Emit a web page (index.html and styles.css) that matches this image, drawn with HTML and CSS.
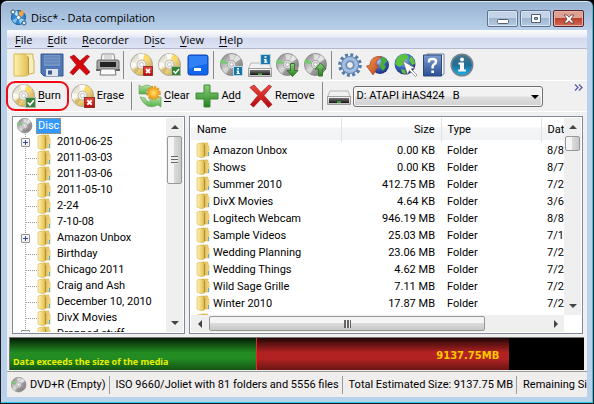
FILE: index.html
```html
<!DOCTYPE html>
<html lang="en">
<head>
<meta charset="utf-8">
<title>Disc* - Data compilation</title>
<link rel="stylesheet" href="styles.css">
</head>
<body>
<svg class="sprite" aria-hidden="true">
  <defs>
    <linearGradient id="gFolder" x1="0" x2="1"><stop offset="0" stop-color="#fff3b0"/><stop offset="1" stop-color="#e2bf55"/></linearGradient>
    <linearGradient id="gFolderBack" x1="0" x2="1"><stop offset="0" stop-color="#c9a13a"/><stop offset="1" stop-color="#f6e08c"/></linearGradient>
    <linearGradient id="gGold" x1="0" y1="0" x2="1" y2="1"><stop offset="0" stop-color="#c9c9c4"/><stop offset=".35" stop-color="#f3efe0"/><stop offset=".6" stop-color="#e9cd78"/><stop offset="1" stop-color="#b98d35"/></linearGradient>
    <linearGradient id="gSilver" x1="0" y1="0" x2="1" y2="1"><stop offset="0" stop-color="#7e7e7e"/><stop offset=".45" stop-color="#cfcfcf"/><stop offset=".6" stop-color="#9c9c9c"/><stop offset="1" stop-color="#6c6c6c"/></linearGradient>
    <linearGradient id="gRed" x1="0" y1="0" x2="0" y2="1"><stop offset="0" stop-color="#ee4a42"/><stop offset="1" stop-color="#b3060c"/></linearGradient>
    <linearGradient id="gGreen" x1="0" y1="0" x2="0" y2="1"><stop offset="0" stop-color="#8fd07c"/><stop offset="1" stop-color="#23821f"/></linearGradient>
    <linearGradient id="gLeaf" x1="0" y1="0" x2="0" y2="1"><stop offset="0" stop-color="#b5e3a6"/><stop offset="1" stop-color="#4fae45"/></linearGradient>
    <linearGradient id="gBlue" x1="0" y1="0" x2="0" y2="1"><stop offset="0" stop-color="#7b9cd0"/><stop offset="1" stop-color="#2c4f93"/></linearGradient>
    <linearGradient id="gMetal" x1="0" y1="0" x2="0" y2="1"><stop offset="0" stop-color="#fbfbfb"/><stop offset="1" stop-color="#b8b8b8"/></linearGradient>
    <linearGradient id="gDark" x1="0" y1="0" x2="0" y2="1"><stop offset="0" stop-color="#777"/><stop offset="1" stop-color="#161616"/></linearGradient>
    <linearGradient id="gInfo" x1="0" y1="0" x2="0" y2="1"><stop offset="0" stop-color="#4d7488"/><stop offset=".5" stop-color="#1f6d95"/><stop offset="1" stop-color="#18b2ee"/></linearGradient>
    <radialGradient id="gGlobe" cx=".4" cy=".3" r=".8"><stop offset="0" stop-color="#a5c8f4"/><stop offset=".5" stop-color="#3862bf"/><stop offset="1" stop-color="#131d62"/></radialGradient>
    <radialGradient id="gSun"><stop offset="0" stop-color="#ffe46c"/><stop offset="1" stop-color="#f49a13"/></radialGradient>
    <linearGradient id="gOrange" x1="0" y1="0" x2="1" y2="1"><stop offset="0" stop-color="#ee9a5c"/><stop offset="1" stop-color="#bf3e10"/></linearGradient>
  </defs>
  <symbol id="folder" viewBox="0 0 14 16">
    <path d="M6 1h6v3h1v10H6z" fill="url(#gFolderBack)" stroke="#dcb84c" stroke-width=".6"/>
    <path d="M1 2l5-1 2 2v12l-2 1-5-2z" fill="url(#gFolder)" stroke="#d6b34c" stroke-width=".6"/>
    <path d="M8 3h1v11l-1 1z" fill="#b88f2c"/>
    <path d="M12 10h1v4h-1z" fill="#58aede"/>
  </symbol>
  <symbol id="goldDisc" viewBox="0 0 24 24">
    <circle cx="11.500" cy="11.500" r="11" fill="url(#gGold)" stroke="#a39b86" stroke-width=".8"/>
    <path d="M11.500 11.500L8 1l6-.5z" fill="#fff" opacity=".8"/>
    <path d="M11.500 11.500L15 1l5 3.500z" fill="#ffd955" opacity=".9"/>
    <path d="M11.500 11.500L1 9v6z" fill="#fff" opacity=".7"/>
    <path d="M11.500 11.500L6 21l-3-4z" fill="#c9ab5c" opacity=".7"/>
    <circle cx="11.500" cy="11.500" r="4.500" fill="#eee" stroke="#b5ab94" stroke-width=".8"/>
    <circle cx="11.500" cy="11.500" r="2" fill="#fff" stroke="#aaa" stroke-width=".6"/>
  </symbol>
  <symbol id="grayDisc" viewBox="0 0 24 24">
    <circle cx="11.500" cy="11.500" r="11" fill="url(#gSilver)" stroke="#7c7c7c" stroke-width=".8"/>
    <path d="M11.500 11.500L9 1l6 .5z" fill="#fff" opacity=".5"/>
    <path d="M11.500 11.500L17 2l4 4z" fill="#eee" opacity=".8"/>
    <path d="M11.500 11.500L1 6l-.5 4z" fill="#6fce68"/>
    <path d="M11.500 11.500L2 17l4 4z" fill="#dcdcdc" opacity=".8"/>
    <path d="M11.500 11.500L22 14l-2 4z" fill="#c98c9e" opacity=".5"/>
    <circle cx="11.500" cy="11.500" r="4.200" fill="#ddd" stroke="#999" stroke-width=".8"/>
    <circle cx="11.500" cy="11.500" r="1.800" fill="#fff" stroke="#888" stroke-width=".6"/>
  </symbol>
  <symbol id="badX" viewBox="0 0 10 10"><path d="M.5.5h9v9h-9z" fill="url(#gRed)" stroke="#94322c"/><path d="M3 3l4 4M7 3L3 7" stroke="#fff" stroke-width="1.800"/></symbol>
  <symbol id="badOk" viewBox="0 0 10 10"><path d="M.5.5h9v9h-9z" fill="#36813a" stroke="#a9bda5"/><path d="M2.500 5l2 2.200L8 3" fill="none" stroke="#fff" stroke-width="1.500"/></symbol>
  <symbol id="badInfo" viewBox="0 0 10 10"><path d="M.5.5h9v9h-9z" fill="#1475a8" stroke="#bdd5df"/><path d="M4 2h2v1.500H4zM3.500 4.500H6V7h.8v1H3.500V7h.7V5.400h-.7z" fill="#fff"/></symbol>
  <symbol id="drive" viewBox="0 0 24 24">
    <path d="M3 7h18l2.500 6H.5z" fill="#f1f1f1" stroke="#aaa" stroke-width=".8"/>
    <path d="M.5 12.500h23v8H.5z" fill="url(#gMetal)" stroke="#8b8b8b" stroke-width=".8"/>
    <path d="M2 14h20v5H2z" fill="url(#gDark)"/><path d="M10 17.500h4v1.200h-4z" fill="#45e23d"/>
  </symbol>
  <symbol id="cross" viewBox="0 0 24 24"><path d="M1 3.500L5 1l7 7.500L20 1l2.500 1.500L15 11.500 23 20.500 19.500 23.500 12 15 4.500 23 1.500 20.500 9 11.500z" fill="url(#gRed)" stroke="#a81216" stroke-width=".7"/></symbol>
</svg>

<div class="window">
  <header class="titlebar">
    <svg class="app-icon" viewBox="0 0 17 17" aria-hidden="true">
      <circle cx="8.500" cy="8.500" r="7" fill="#3187d3" stroke="#174f92"/>
      <path d="M8.500 8.500L3 4l4-2.500z" fill="#bce8ff"/><path d="M8.500 8.500L15 11l-5 4z" fill="#8fd3f5"/><path d="M8.500 8.500L2 11l3 3.500z" fill="#7cc4f0"/>
      <path d="M9 7l0-5 1.500 1L12 0l2 4-2 4z" fill="#f6a238"/>
      <circle cx="8.500" cy="8.500" r="2" fill="#fff" stroke="#27577e" stroke-width=".6"/><circle cx="3" cy="3" r="2" fill="#fff" stroke="#27577e"/><circle cx="14" cy="14" r="2" fill="#d9f1ff" stroke="#27577e"/>
    </svg>
    <h1 class="title">Disc* - Data compilation</h1>
    <div class="caption-buttons">
      <button class="caption" aria-label="Minimize"><svg viewBox="0 0 12 12"><rect x=".5" y="6.500" width="11" height="4" rx="1" fill="#fff" stroke="#535f70"/></svg></button>
      <button class="caption" aria-label="Maximize"><svg viewBox="0 0 12 12"><path d="M1.500 1.500h9v8h-9zM4.500 4.500v2h3v-2z" fill="#fff" fill-rule="evenodd" stroke="#535f70"/></svg></button>
      <button class="caption close" aria-label="Close"><svg viewBox="0 0 12 12"><path d="M1 2h3l2 2.200L8 2h3L8 6l3 4H8L6 7.800 4 10H1l3-4z" fill="#fff" stroke="#5c3b43" stroke-width=".8"/></svg></button>
    </div>
  </header>

  <main class="client">
    <nav class="menubar">
      <button><u>F</u>ile</button><button><u>E</u>dit</button><button><u>R</u>ecorder</button><button>D<u>i</u>sc</button><button><u>V</u>iew</button><button><u>H</u>elp</button>
    </nav>

    <div class="toolbar" role="toolbar" aria-label="Standard">
      <button class="tool" aria-label="Open"><svg viewBox="0 0 24 24"><path d="M10 1h11v5l1 1v13l-9 2z" fill="#f7edbd" stroke="#cfb058"/><path d="M2 1h10l4 3v18l-3 1H2z" fill="url(#gFolder)" stroke="#d6b858"/><path d="M16 5l1-2v17l-1 2z" fill="#bd9535"/></svg></button>
      <button class="tool" aria-label="Save"><svg viewBox="0 0 24 24"><path d="M1 1h22v22H4l-3-3z" fill="#5078b6" stroke="#365789"/><path d="M4 2h16v11H4z" fill="#7595c8"/><path d="M5 4h14M5 7h14M5 10h14" stroke="#587caf"/><path d="M6 16h12v7H6z" fill="#dfe6ee"/><path d="M8 17.500h4v4H8z" fill="#3c5c92"/></svg></button>
      <button class="tool" aria-label="Delete"><svg viewBox="0 0 24 24"><path d="M2 4l4-2 6 6 7-6 2.500 1.500L15 11l7 8-3.500 3-7-7L5 22l-3-2.500L8.500 12z" fill="#d4080d" stroke="#ab1a1a" stroke-width=".8"/></svg></button>
      <button class="tool" aria-label="Print"><svg viewBox="0 0 24 24"><path d="M6 1h12l1 7H5z" fill="#f8f8f8" stroke="#8c8c8c"/><path d="M8 3h8M8 5h8" stroke="#bbb"/><path d="M1 8q0-1 2-1h18q2 0 2 1v9H1z" fill="#a5a5a5" stroke="#6a6a6a"/><path d="M4 9h16v5H4z" fill="#222"/><path d="M0 16h24v2H0z" fill="#666"/><path d="M5 16h14l1 6H4z" fill="#fafafa" stroke="#777"/></svg></button>
      <span class="sep"></span>
      <button class="tool" aria-label="Erase disc"><svg viewBox="0 0 24 24"><use href="#goldDisc"/><use href="#badX" x="13" y="13" width="10" height="10"/></svg></button>
      <button class="tool" aria-label="Burn disc"><svg viewBox="0 0 24 24"><use href="#goldDisc"/><use href="#badOk" x="13" y="13" width="10" height="10"/></svg></button>
      <button class="tool" aria-label="Blue view"><svg viewBox="0 0 24 24"><rect x="2" y="2" width="20" height="20" rx="2" fill="#1268ec" stroke="#1040b5"/><path d="M3 3h18v8q-9 1-18 5z" fill="#3f8af9" opacity=".7"/><path d="M8 15h7v3H8z" fill="#fff"/></svg></button>
      <span class="sep"></span>
      <button class="tool" aria-label="Disc information"><svg viewBox="0 0 24 24"><use href="#grayDisc"/><use href="#badInfo" x="13" y="13" width="10" height="10"/></svg></button>
      <button class="tool" aria-label="Drive information"><svg viewBox="0 0 24 24"><use href="#drive" y="3" width="24" height="24"/><use href="#badInfo" x="12" y="1" width="11" height="11"/></svg></button>
      <button class="tool" aria-label="Import session"><svg viewBox="0 0 24 24"><use href="#grayDisc"/><path d="M14.500 10.500h4v7h3.500l-5.500 6-5.500-6h3.500z" fill="url(#gGreen)" stroke="#39752f"/></svg></button>
      <button class="tool" aria-label="Export session"><svg viewBox="0 0 24 24"><use href="#grayDisc"/><path d="M14.500 23v-7H11l5.500-6 5.500 6h-3.500v7z" fill="url(#gGreen)" stroke="#39752f"/></svg></button>
      <span class="sep"></span>
      <button class="tool" aria-label="Options"><svg viewBox="0 0 24 24"><circle cx="12" cy="12" r="10.200" fill="none" stroke="#557bab" stroke-width="3.200" stroke-dasharray="3 2.340"/><circle cx="12" cy="12" r="6.300" fill="none" stroke="#5f82af" stroke-width="5.600"/><circle cx="12" cy="12" r="6.300" fill="none" stroke="#a1bedf" stroke-width="3.500"/><circle cx="12" cy="12" r="3.500" fill="#f0f0f0" stroke="#5d7fa9"/></svg></button>
      <button class="tool" aria-label="Web update"><svg viewBox="0 0 24 24"><circle cx="14" cy="12" r="9" fill="url(#gGlobe)"/><path d="M15 4q6 0 6 5l-3 2 2 3-3 4-3-4 1-5z" fill="#49ac3b"/><path d="M16 4C8 2 4 7 4 12L.5 13 7 22l6-10-3 .5C10 8 13 5 16 4z" fill="url(#gOrange)" stroke="#a84620" stroke-width=".7"/></svg></button>
      <button class="tool" aria-label="Web site"><svg viewBox="0 0 24 24"><circle cx="11" cy="11" r="10.500" fill="url(#gGlobe)"/><path d="M3 5q4-4 9-4l3 3-4 3-1 4-5 3-4-3zM17 3q4 4 4 8l-3 1-3-5zM7 16l4 1 1 4-4-1z" fill="#5ec33c"/><path d="M9 8l12 7-4 1 6 6-1.500 1.500-6-6-2 4z" fill="#fff" stroke="#777" stroke-width=".7"/></svg></button>
      <button class="tool" aria-label="Help"><svg viewBox="0 0 24 24"><path d="M5 1h17v20l-3 2z" fill="#f7f9fc" stroke="#7083a3"/><path d="M1.500 2h18v21h-18z" fill="url(#gBlue)" stroke="#2b4678"/><path d="M7 9.500V8q0-2 3.500-2T14 8.500q0 1.700-1.700 2.700T10.600 14v1.500" fill="none" stroke="#fff" stroke-width="2.500"/><path d="M9.300 17.500h2.700V20H9.300z" fill="#fff"/></svg></button>
      <button class="tool" aria-label="About"><svg viewBox="0 0 24 24"><circle cx="12" cy="12" r="10.700" fill="url(#gInfo)" stroke="#71858e" stroke-width="1.600"/><circle cx="12" cy="6.500" r="2" fill="#fff"/><path d="M8.500 9.500H14v7h1.800v2H8.300v-2H10v-5H8.500z" fill="#fff"/></svg></button>
    </div>

    <div class="toolbar second" role="toolbar" aria-label="Compilation">
      <button class="action marked"><svg viewBox="0 0 24 24"><use href="#goldDisc"/><use href="#badOk" x="13" y="13" width="11" height="11"/></svg><span><u>B</u>urn</span></button>
      <button class="action"><svg viewBox="0 0 24 24"><use href="#goldDisc"/><use href="#badX" x="13" y="13" width="11" height="11"/></svg><span>Er<u>a</u>se</span></button>
      <span class="sep"></span>
      <button class="action"><svg viewBox="0 0 24 24"><path d="M1 1l3 2q5-4 10 0l-3 4q-3-1-4 0l3 3H1z" fill="url(#gLeaf)" stroke="#6aa763" stroke-width=".7"/><path d="M2 13l5 1q1 4 6 4l-2-4 12-1v10l-3-2Q8 27 2 13z" fill="url(#gLeaf)" stroke="#6aa763" stroke-width=".7"/><circle cx="15.500" cy="9" r="6" fill="none" stroke="#dc9a24" stroke-width="2.500" stroke-dasharray="2 1.140"/><circle cx="15.500" cy="9" r="5.500" fill="url(#gSun)"/></svg><span><u>C</u>lear</span></button>
      <button class="action spaced"><svg viewBox="0 0 24 24"><path d="M9 1h6v8h8v6h-8v8H9v-8H1V9h8z" fill="url(#gGreen)" stroke="#3d8b39"/></svg><span>A<u>d</u>d</span></button>
      <button class="action"><svg viewBox="0 0 24 24"><use href="#cross"/></svg><span>Re<u>m</u>ove</span></button>
      <span class="sep"></span>
      <svg class="drive-icon" viewBox="0 0 24 24" aria-hidden="true"><use href="#drive"/></svg>
      <div class="drive-select"><select aria-label="Recorder"><option>D: ATAPI iHAS424 &nbsp; B</option></select></div>
      <button class="more" aria-label="More buttons"><svg viewBox="0 0 9 7"><path d="M1 .5l3 3-3 3M5 .5l3 3-3 3" fill="none" stroke="#5c5aa6" stroke-width="1.300"/></svg></button>
    </div>

    <div class="panes">
      <section class="pane tree-pane" aria-label="Folders">
        <div class="tree">
          <div class="root"><svg viewBox="0 0 24 24"><use href="#grayDisc"/></svg><span class="selected">Disc</span></div>
          <ul>
            <li><button class="expand" aria-label="Expand"></button><svg><use href="#folder"/></svg>2010-06-25</li>
            <li><i></i><svg><use href="#folder"/></svg>2011-03-03</li>
            <li><i></i><svg><use href="#folder"/></svg>2011-03-06</li>
            <li><i></i><svg><use href="#folder"/></svg>2011-05-10</li>
            <li><i></i><svg><use href="#folder"/></svg>2-24</li>
            <li><i></i><svg><use href="#folder"/></svg>7-10-08</li>
            <li><button class="expand" aria-label="Expand"></button><svg><use href="#folder"/></svg>Amazon Unbox</li>
            <li><i></i><svg><use href="#folder"/></svg>Birthday</li>
            <li><i></i><svg><use href="#folder"/></svg>Chicago 2011</li>
            <li><i></i><svg><use href="#folder"/></svg>Craig and Ash</li>
            <li><i></i><svg><use href="#folder"/></svg>December 10, 2010</li>
            <li><i></i><svg><use href="#folder"/></svg>DivX Movies</li>
            <li><button class="expand" aria-label="Expand"></button><svg><use href="#folder"/></svg>Dropped stuff</li>
          </ul>
        </div>
        <div class="vscroll"><b class="arrow up"></b><b class="thumb tall"></b><b class="arrow down"></b></div>
      </section>

      <section class="pane list-pane" aria-label="Files">
        <div class="list">
          <table>
            <colgroup><col class="c-name"><col class="c-size"><col class="c-type"><col class="c-date"></colgroup>
            <thead><tr><th>Name</th><th class="num">Size</th><th>Type</th><th>Date</th></tr></thead>
            <tbody>
              <tr><td><svg><use href="#folder"/></svg>Amazon Unbox</td><td class="num">0.00 KB</td><td>Folder</td><td>8/8</td></tr>
              <tr><td><svg><use href="#folder"/></svg>Shows</td><td class="num">0.00 KB</td><td>Folder</td><td>8/7</td></tr>
              <tr><td><svg><use href="#folder"/></svg>Summer 2010</td><td class="num">412.75 MB</td><td>Folder</td><td>7/2</td></tr>
              <tr><td><svg><use href="#folder"/></svg>DivX Movies</td><td class="num">4.64 KB</td><td>Folder</td><td>3/6</td></tr>
              <tr><td><svg><use href="#folder"/></svg>Logitech Webcam</td><td class="num">946.19 MB</td><td>Folder</td><td>8/8</td></tr>
              <tr><td><svg><use href="#folder"/></svg>Sample Videos</td><td class="num">25.03 MB</td><td>Folder</td><td>7/1</td></tr>
              <tr><td><svg><use href="#folder"/></svg>Wedding Planning</td><td class="num">23.06 MB</td><td>Folder</td><td>7/2</td></tr>
              <tr><td><svg><use href="#folder"/></svg>Wedding Things</td><td class="num">4.62 MB</td><td>Folder</td><td>7/2</td></tr>
              <tr><td><svg><use href="#folder"/></svg>Wild Sage Grille</td><td class="num">7.11 MB</td><td>Folder</td><td>7/2</td></tr>
              <tr><td><svg><use href="#folder"/></svg>Winter 2010</td><td class="num">17.87 MB</td><td>Folder</td><td>7/2</td></tr>
              <tr><td><svg><use href="#folder"/></svg></td><td></td><td></td><td></td></tr>
            </tbody>
          </table>
        </div>
        <div class="vscroll"><b class="arrow up"></b><b class="thumb short"></b><b class="arrow down"></b></div>
        <div class="hscroll"><b class="arrow left"></b><b class="thumb"></b><b class="arrow right"></b></div>
      </section>
    </div>

    <div class="capacity">
      <div class="used">Data exceeds the size of the media</div>
      <div class="over">9137.75MB</div>
    </div>

    <footer class="status">
      <span class="media"><svg viewBox="0 0 24 24" aria-hidden="true"><use href="#grayDisc"/></svg>DVD+R (Empty)</span>
      <span>ISO 9660/Joliet with 81 folders and 5556 files</span>
      <span>Total Estimated Size: 9137.75 MB</span>
      <span>Remaining Size</span>
    </footer>
  </main>
</div>
</body>
</html>
```

FILE: styles.css
```css
* { box-sizing: border-box; }

body {
  margin: 0;
  background: #000;
  color: #000;
  font: 11px/16px Roboto, "Liberation Sans", sans-serif;
  overflow: hidden;
}

button {
  margin: 0;
  padding: 0;
  border: 0;
  background: none;
  color: inherit;
  font: inherit;
}

svg { display: block; flex: none; }
u { text-underline-offset: 2px; }
.sprite { position: absolute; width: 0; height: 0; }

/* Window frame */
.window {
  display: flex;
  flex-direction: column;
  height: 100vh;
  padding: 0 6px 6px 6px;
  border: 1px solid #1b1d22;
  border-radius: 7px 7px 0 0;
  background: linear-gradient(#98b2d1, #b9d1ea 30px);
  box-shadow: inset -1px -1px #27c9e4, inset 0 1px #dcebf8;
}

.titlebar {
  display: flex;
  flex: none;
  height: 29px;
  padding-left: 3px;
}

.app-icon { width: 17px; height: 17px; margin-top: 8px; }

.title {
  flex: 1;
  margin: 9px 0 0 4px;
  font: 11px/16px "Open Sans", sans-serif;
}

.caption-buttons { display: flex; gap: 2px; padding: 9px 3px 0 0; }

.caption {
  display: grid;
  place-items: center;
  width: 31px;
  height: 17px;
  border: 1px solid #60738c;
  border-radius: 2px;
  background: linear-gradient(#c3d4e8 45%, #9db5d0 50%, #b6cce4);
  box-shadow: inset 0 0 0 1px #d5e3f2;
}

.caption svg { width: 12px; height: 12px; }

.caption.close {
  border-color: #5b2430;
  background: linear-gradient(#dda093 45%, #bd402b 50%, #cf6c52);
  box-shadow: inset 0 0 0 1px #e3b0a6;
}

.client {
  display: flex;
  flex: 1;
  flex-direction: column;
  min-height: 0;
  background: #f0f0f0;
}

/* Menu and toolbars */
.menubar {
  display: flex;
  flex: none;
  gap: 15px;
  height: 19px;
  padding-left: 8px;
  border-bottom: 1px solid #b3b8d0;
  background: linear-gradient(#fff, #e4e8f4 40%, #d3daee 45%, #dde3f3);
  font: 11px/19px "Open Sans", sans-serif;
}

.toolbar {
  display: flex;
  flex: none;
  align-items: center;
  height: 32px;
  padding-left: 3px;
  border-bottom: 1px solid #fff;
}

.tool { width: 28px; }
.tool svg, .action svg, .drive-icon { width: 24px; height: 24px; }
.tool svg { margin: auto; }

.sep {
  flex: none;
  width: 1px;
  height: 28px;
  margin: 0 4px 0 1px;
  background: #888;
}

.second { height: 31px; }
.second .sep { margin: 0 4px 0 3px; }

.action {
  display: flex;
  position: relative;
  align-items: center;
  gap: 2px;
  padding: 0 4px 0 2px;
}

.marked { padding-right: 8px; }
.spaced { padding-right: 6px; }

.marked::after {
  content: "";
  position: absolute;
  inset: -3px 0 -3px -4px;
  border: 2px solid #f00a14;
  border-radius: 9px;
}

.drive-select { position: relative; flex: 0 1 190px; margin-left: 2px; }

.drive-select select {
  display: block;
  width: 100%;
  height: 21px;
  padding: 0 20px 0 3px;
  border: 1px solid #707070;
  border-radius: 3px;
  appearance: none;
  background: linear-gradient(#f2f2f2 48%, #dedede 52%, #d0d0d0);
  box-shadow: inset 0 0 0 1px #fafafa;
  color: inherit;
  font: inherit;
}

.drive-select::after {
  content: "";
  position: absolute;
  top: 9px;
  right: 4px;
  border: 4px solid transparent;
  border-top-color: #000;
  border-bottom: 0;
}

.more { align-self: flex-start; margin: 3px 4px 0 auto; }
.more svg { width: 9px; height: 7px; }

/* Tree and file list */
.panes {
  display: grid;
  flex: 1;
  grid-template-columns: 173px 1fr;
  gap: 4px;
  min-height: 0;
  margin: 4px 4px 3px 5px;
}

.pane {
  display: grid;
  grid-template-columns: 1fr 17px;
  min-width: 0;
  min-height: 0;
  padding: 1px;
  border: 1px solid #82879c;
  background: #fff;
}

.tree { min-height: 0; overflow: hidden; white-space: nowrap; }
.tree ul { margin: 0; padding: 0; list-style: none; }

.root { display: flex; align-items: center; gap: 3px; height: 16px; padding-left: 3px; }
.root svg { width: 16px; height: 16px; }

.selected {
  padding: 0 2px;
  outline: 1px dotted #d98a35;
  outline-offset: -1px;
  background: #3399ff;
  color: #fff;
}

.tree li {
  display: flex;
  align-items: center;
  height: 16px;
  padding-left: 7px;
  background: repeating-linear-gradient(#999 0 1px, transparent 1px 2px) 11px 0 / 1px 100% no-repeat;
}

.tree li i { width: 11px; margin-left: 5px; border-top: 1px dotted #999; }
.tree li svg { width: 14px; height: 16px; margin-right: 6px; }

.expand {
  width: 9px;
  height: 9px;
  margin-right: 7px;
  border: 1px solid #8f8f8f;
  border-radius: 1px;
  background:
    linear-gradient(#2c4aa0, #2c4aa0) center / 5px 1px no-repeat,
    linear-gradient(#2c4aa0, #2c4aa0) center / 1px 5px no-repeat,
    #f5f5f5;
}

.list-pane { grid-template-rows: minmax(0, 1fr) 17px; }
.list { min-width: 0; overflow: hidden; }

table {
  width: 450px;
  border-collapse: collapse;
  table-layout: fixed;
}

.c-name { width: 150px; }
.c-size { width: 100px; }
.c-type { width: 100px; }
.c-date { width: 100px; }

th, td { height: 17px; padding: 0 6px; text-align: left; white-space: nowrap; }

th {
  height: 24px;
  border-right: 1px solid #dfe1e4;
  background: linear-gradient(#fff 40%, #f4f5f7 45%, #f1f2f4) 0 0 / 100% 22px no-repeat;
  font-weight: 400;
}

td { line-height: 17px; }
td svg { float: left; width: 14px; height: 16px; margin: 0 3px 0 -1px; }
th.num, td.num { text-align: right; }

.vscroll, .hscroll { display: flex; background: #efefef; }
.vscroll { flex-direction: column; align-items: center; }
.hscroll { align-items: center; }

.arrow { flex: none; border: 4px solid transparent; }
.up { margin: 7px 0; border-top: 0; border-bottom-color: #444; }
.down { margin: auto 0 7px; border-bottom: 0; border-top-color: #444; }
.left { margin: 0 7px; border-left: 0; border-right-color: #444; }
.right { margin: 0 6px 0 auto; border-right: 0; border-left-color: #444; }

.thumb { border: 1px solid #989898; border-radius: 2px; }

.vscroll .thumb {
  width: 15px;
  background: linear-gradient(90deg, #f5f5f5 45%, #dadada 50%, #c8c8c8);
}

.tall { height: 48px; }

.tall::after, .hscroll .thumb::after {
  content: "";
  width: 7px;
  height: 8px;
  background: repeating-linear-gradient(#666 0 1px, #eee 1px 3px);
}

.tall, .hscroll .thumb { display: grid; place-items: center; }
.short { height: 15px; }

.hscroll .thumb {
  width: 74%;
  height: 15px;
  background: linear-gradient(#f5f5f5 45%, #dadada 50%, #c8c8c8);
}

.hscroll .thumb::after { background: repeating-linear-gradient(90deg, #666 0 2px, #eee 2px 3px); }

/* Disc capacity */
.capacity {
  display: flex;
  flex: none;
  height: 33px;
  margin: 0 3px 0 2px;
  border: 1px solid #777;
  border-width: 1px 0 0 1px;
  background: #000;
}

.used {
  width: 43%;
  padding: 16px 0 0 3px;
  border-right: 1px solid #e12a2a;
  background: linear-gradient(#061d06, #228b22 45%, #228b22 65%, #145314);
  color: #e6f000;
  font: 700 9px/16px "Noto Sans", sans-serif;
  white-space: nowrap;
}

.over {
  width: 44%;
  padding: 10px 10px 0 0;
  background: linear-gradient(#220606, #b22222 45%, #b22222 65%, #6a1414);
  color: #ffc800;
  font: 700 10px/16px "DejaVu Sans", sans-serif;
  text-align: right;
}

/* Status bar */
.status {
  display: flex;
  flex: none;
  align-items: center;
  height: 26px;
  margin-top: 1px;
  padding-left: 4px;
  border-top: 1px solid #999;
  background: #f0eded;
  overflow: hidden;
  white-space: nowrap;
}

.status span {
  flex: none;
  padding: 1px 3px 1px 6px;
  border-right: 1px solid #999;
}

.status span:last-child { border: 0; }
.status .media { display: flex; align-items: center; gap: 3px; padding-left: 0; }
.media svg { width: 16px; height: 16px; }
```
